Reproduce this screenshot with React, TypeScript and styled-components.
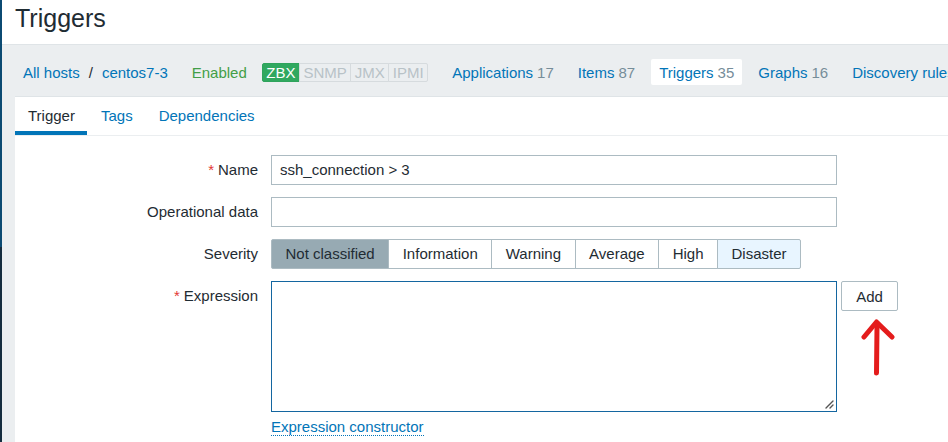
import React from "react";
import styled, { createGlobalStyle } from "styled-components";

const Global = createGlobalStyle`
  html, body { margin: 0; padding: 0; background: #ebeef0; }
  body { font-family: "Liberation Sans", Arial, sans-serif; color: #1f2c33; overflow: hidden; }
  * { box-sizing: border-box; }
`;

const Page = styled.div`
  display: flex;
  width: 948px;
  height: 442px;
  overflow: hidden;
`;

const Sidebar = styled.div`
  width: 2px;
  flex: none;
  background: linear-gradient(to bottom, #0b4a72 0, #0b4a72 247px, #142c3e 247px, #142c3e 100%);
`;

const Main = styled.div`
  flex: 1;
  min-width: 0;
  display: flex;
  flex-direction: column;
  background: #ebeef0;
`;

const Header = styled.header`
  height: 45px;
  background: #fff;
  border-bottom: 1px solid #dfe4e7;
  padding: 2px 0 0 13px;
`;

const Title = styled.h1`
  margin: 0;
  font-size: 25px;
  font-weight: normal;
  line-height: 32px;
  color: #1f2c33;
  white-space: nowrap;
`;

const NavBar = styled.nav`
  height: 51px;
  display: flex;
  align-items: center;
  padding: 3px 0 0 13px;
  gap: 8px;
  font-size: 15px;
  white-space: nowrap;
`;

const Crumbs = styled.div`
  display: flex;
  align-items: center;
  padding: 0 8px;
`;

const Sep = styled.span`
  margin: 0 9px;
  color: #1f2c33;
`;

const Link = styled.a`
  color: #0275b8;
  text-decoration: none;
`;

const Status = styled.span`
  color: #429e47;
  padding: 0 8px;
`;

const Badges = styled.div`
  display: flex;
  align-items: center;
  margin-left: -1px;
`;

const Badge = styled.span<{ $on?: boolean }>`
  display: inline-block;
  height: 19px;
  line-height: 18px;
  padding: 0 3.5px;
  font-size: 15px;
  border: 1px solid ${(p) => (p.$on ? "#2fa35c" : "#d6dbde")};
  background: ${(p) => (p.$on ? "#30a85f" : "#ebeef0")};
  color: ${(p) => (p.$on ? "#fff" : "#b8c2c7")};
  margin-left: -1px;
  &:first-child { border-radius: 2px 0 0 2px; margin-left: 0; }
  &:last-child { border-radius: 0 2px 2px 0; }
`;

const NavItem = styled.a<{ $active?: boolean }>`
  display: inline-flex;
  align-items: center;
  height: 26px;
  padding: 0 8px;
  color: #0275b8;
  text-decoration: none;
  background: ${(p) => (p.$active ? "#fff" : "transparent")};
  border-radius: 2px;
`;

const Count = styled.span`
  color: #768d99;
  margin-left: 4px;
`;

const ContentWrap = styled.div`
  flex: 1;
  padding-left: 13px;
`;

const Panel = styled.section`
  background: #fff;
  border-top: 1px solid #dfe4e7;
  height: 100%;
`;

const TabList = styled.div`
  display: flex;
  gap: 1px;
  border-bottom: 1px solid #ebeef0;
  font-size: 15px;
`;

const Tab = styled.a<{ $active?: boolean }>`
  display: block;
  padding: 3px 12px 0 13px;
  line-height: 31px;
  border-bottom: 4px solid ${(p) => (p.$active ? "#0275b8" : "transparent")};
  color: ${(p) => (p.$active ? "#1f2c33" : "#0275b8")};
  text-decoration: none;
`;

const Form = styled.div`
  display: grid;
  grid-template-columns: 243px 566px auto;
  column-gap: 13px;
  row-gap: 12px;
  padding-top: 19px;
  font-size: 15px;
  align-items: start;
`;

const Label = styled.label`
  text-align: right;
  line-height: 30px;
  white-space: nowrap;
  color: #1f2c33;
`;

const Req = styled.span`
  color: #e33734;
  margin-right: 4px;
`;

const Input = styled.div`
  height: 30px;
  border: 1px solid #acbbc2;
  padding: 0 8px;
  line-height: 28px;
  background: #fff;
  color: #1f2c33;
  grid-column: 2;
`;

const Segmented = styled.div`
  display: flex;
  grid-column: 2 / span 2;
`;

const Seg = styled.span<{ $state?: "selected" | "hover" }>`
  height: 30px;
  line-height: 28px;
  padding: 0 13.5px;
  border: 1px solid #acbbc2;
  margin-left: -1px;
  white-space: nowrap;
  background: ${(p) =>
    p.$state === "selected" ? "#97aab3" : p.$state === "hover" ? "#e8f5ff" : "#fff"};
  &:first-child { margin-left: 0; border-radius: 2px 0 0 2px; }
  &:last-child { border-radius: 0 2px 2px 0; }
`;

const ExprCell = styled.div`
  grid-column: 2;
  display: flex;
  flex-direction: column;
  gap: 6px;
`;

const TextArea = styled.div`
  position: relative;
  height: 131px;
  border: 1px solid #1466a0;
  background: #fff;
`;

const Grip = styled.svg`
  position: absolute;
  right: 2px;
  bottom: 2px;
`;

const DottedLink = styled.a`
  align-self: flex-start;
  color: #0275b8;
  text-decoration: none;
  border-bottom: 1px dotted #0275b8;
  line-height: 17px;
`;

const AddCell = styled.div`
  position: relative;
  margin-left: -9px;
`;

const AddButton = styled.button`
  width: 57px;
  height: 30px;
  border: 1px solid #acbbc2;
  border-radius: 2px;
  background: #fff;
  font-family: inherit;
  font-size: 15px;
  color: #1f2c33;
  padding: 0;
`;

const Arrow = styled.svg`
  position: absolute;
  left: 20px;
  top: 36px;
`;

const navItems: { label: string; count: string; active?: boolean }[] = [
  { label: "Applications", count: "17" },
  { label: "Items", count: "87" },
  { label: "Triggers", count: "35", active: true },
  { label: "Graphs", count: "16" },
  { label: "Discovery rules", count: "" },
];

const severities = ["Not classified", "Information", "Warning", "Average", "High", "Disaster"];

export default function App() {
  return (
    <>
      <Global />
      <Page>
        <Sidebar />
        <Main>
          <Header>
            <Title>Triggers</Title>
          </Header>
          <NavBar>
            <Crumbs>
              <Link>All hosts</Link>
              <Sep>/</Sep>
              <Link>centos7-3</Link>
            </Crumbs>
            <Status>Enabled</Status>
            <Badges>
              <Badge $on>ZBX</Badge>
              <Badge>SNMP</Badge>
              <Badge>JMX</Badge>
              <Badge>IPMI</Badge>
            </Badges>
            <span style={{ width: 7 }} />
            {navItems.map((n) => (
              <NavItem key={n.label} $active={n.active}>
                {n.label}
                {n.count && <Count>{n.count}</Count>}
              </NavItem>
            ))}
          </NavBar>
          <ContentWrap>
            <Panel>
              <TabList>
                <Tab $active>Trigger</Tab>
                <Tab>Tags</Tab>
                <Tab>Dependencies</Tab>
              </TabList>
              <Form>
                <Label><Req>*</Req>Name</Label>
                <Input>ssh_connection &gt; 3</Input>
                <span />
                <Label>Operational data</Label>
                <Input />
                <span />
                <Label>Severity</Label>
                <Segmented>
                  {severities.map((s, i) => (
                    <Seg key={s} $state={i === 0 ? "selected" : i === 5 ? "hover" : undefined}>{s}</Seg>
                  ))}
                </Segmented>
                <Label><Req>*</Req>Expression</Label>
                <ExprCell>
                  <TextArea>
                    <Grip width="10" height="10" viewBox="0 0 10 10">
                      <path d="M9 2 L2 9 M9 6 L6 9" stroke="#555" strokeWidth="1.4" strokeLinecap="round" />
                    </Grip>
                  </TextArea>
                  <DottedLink>Expression constructor</DottedLink>
                </ExprCell>
                <AddCell>
                  <AddButton>Add</AddButton>
                  <Arrow width="40" height="62" viewBox="0 0 40 62">
                    <path d="M15.5 56 L16 10" stroke="#e41c1c" strokeWidth="5" strokeLinecap="round" fill="none" />
                    <path d="M3 20 L15.5 5 L31 20" stroke="#e41c1c" strokeWidth="5" strokeLinecap="round" strokeLinejoin="round" fill="none" />
                  </Arrow>
                </AddCell>
              </Form>
            </Panel>
          </ContentWrap>
        </Main>
      </Page>
    </>
  );
}
